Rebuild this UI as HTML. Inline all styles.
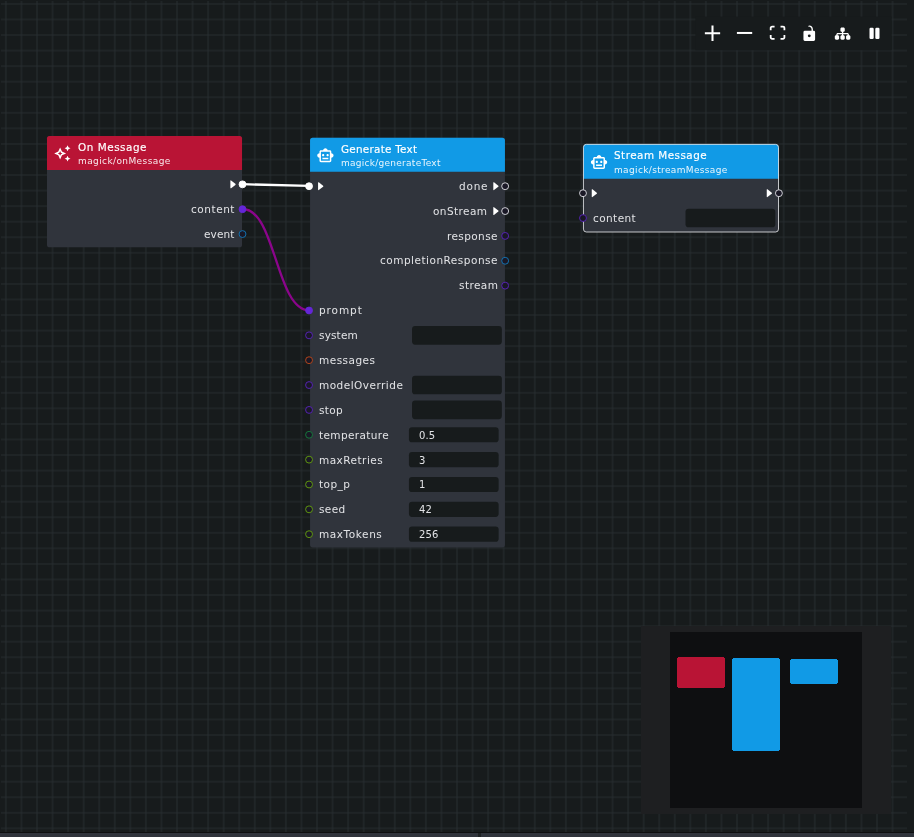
<!DOCTYPE html>
<html lang="en">
<head>
<meta charset="utf-8">
<title>Magick Graph</title>
<style>
html,body{margin:0;padding:0;}
body{width:914px;height:837px;overflow:hidden;background:#171b1c;position:relative;font-family:"DejaVu Sans", "Liberation Sans", sans-serif;color:#e2e3e6;}
#shapes{position:absolute;left:0;top:0;}
#labels{position:absolute;left:0;top:0;width:914px;height:837px;}
#labels div{position:absolute;white-space:nowrap;will-change:transform;}
.ttl{font-size:10.4px;line-height:12px;letter-spacing:0.47px;color:#fff;-webkit-text-stroke:0.15px #fff;}
.sub{font-size:9.0px;line-height:11px;letter-spacing:0.36px;color:rgba(255,255,255,0.9);}
.lab{font-size:10.5px;line-height:12px;letter-spacing:0.3px;color:#e2e3e6;}
.val{font-size:10.0px;line-height:12px;letter-spacing:0.1px;color:#e2e3e6;}
</style>
</head>
<body>
<svg id="shapes" width="914" height="837" viewBox="0 0 914 837">
<defs><pattern id="grid" x="-1.8778" y="-3.8578" width="15.5556" height="15.5556" patternUnits="userSpaceOnUse">
<path d="M7.7778 0 V15.5556 M0 7.7778 H15.5556" stroke="#272d30" stroke-width="1" fill="none"/></pattern></defs>
<rect x="1" y="1" width="906" height="831" fill="url(#grid)"/>
<rect x="0" y="832" width="914" height="1" fill="#0e0f10"/>
<rect x="0" y="833" width="914" height="4" fill="#30343c"/>
<rect x="478" y="833" width="3" height="4" fill="#1e2224"/>
<path d="M242.5 209.0 C275.9 209.0 275.9 310.4 309.3 310.4" fill="none" stroke="#8b058b" stroke-width="2.3"/>
<path d="M242.5 184.2 L309.3 185.9" fill="none" stroke="#fff" stroke-width="2.3"/>
<rect x="47.00" y="135.95" width="195.04" height="111.35" rx="2.6" fill="#30343c"/>
<path d="M47.00 169.95 V138.55 Q47.00 135.95 49.60 135.95 H239.44 Q242.04 135.95 242.04 138.55 V169.95 Z" fill="#b91435"/>
<svg x="53.45" y="144.55" width="17.8" height="17.8" viewBox="0 0 24 24"><path fill="#fff" d="m19 9 1.25-2.75L23 5l-2.750-1.250L19 1l-1.250 2.750L15 5l2.750 1.250zm0 6-1.250 2.750L15 19l2.750 1.250L19 23l1.250-2.750L23 19l-2.750-1.250zm-7.500-5.500L9 4 6.500 9.500 1 12l5.500 2.500L9 20l2.500-5.500L17 12zm-1.510 3.490L9 15.170l-.99-2.180L5.830 12l2.180-.99L9 8.830l.99 2.180 2.180.99z"/></svg>
<circle cx="242.50" cy="184.35" r="3.45" fill="#fff" stroke="#fff" stroke-width="0.9"/>
<path transform="translate(230.39 180.05)" d="M0.7 0.4 Q0 0 0 0.9 V7.7 Q0 8.6 0.7 8.2 L5 4.85 Q5.55 4.3 5 3.75 Z" fill="#fff"/>
<circle cx="242.50" cy="209.21" r="3.45" fill="#6426d7" stroke="#6426d7" stroke-width="0.9"/>
<circle cx="242.50" cy="234.06" r="3.45" fill="#1a1826" stroke="#1279bd" stroke-width="0.9"/>
<rect x="310.04" y="137.80" width="194.90" height="409.65" rx="2.6" fill="#30343c"/>
<path d="M310.04 171.80 V140.40 Q310.04 137.80 312.64 137.80 H502.34 Q504.94 137.80 504.94 140.40 V171.80 Z" fill="#119ae6"/>
<svg x="316.49" y="146.65" width="17.8" height="17.8" viewBox="0 0 24 24"><path fill="#fff" d="M20 9V7c0-1.100-.9-2-2-2h-3c0-1.660-1.340-3-3-3S9 3.340 9 5H6c-1.100 0-2 .9-2 2v2c-1.660 0-3 1.340-3 3s1.340 3 3 3v4c0 1.100.9 2 2 2h12c1.100 0 2-.9 2-2v-4c1.660 0 3-1.340 3-3s-1.340-3-3-3zm-2 10H6V7h12v12zm-9-6c-.830 0-1.500-.670-1.500-1.500S8.170 10 9 10s1.500.67 1.500 1.500S9.830 13 9 13zm7.500-1.500c0 .830-.670 1.500-1.500 1.500s-1.500-.670-1.500-1.500.670-1.500 1.500-1.500 1.500.67 1.500 1.500zM8 15h8v2H8v-2z"/></svg>
<circle cx="309.05" cy="186.20" r="3.45" fill="#fff" stroke="#fff" stroke-width="0.9"/>
<path transform="translate(318.09 181.90)" d="M0.7 0.4 Q0 0 0 0.9 V7.7 Q0 8.6 0.7 8.2 L5 4.85 Q5.55 4.3 5 3.75 Z" fill="#fff"/>
<circle cx="505.15" cy="186.20" r="3.45" fill="#1a1826" stroke="#e4e4ea" stroke-width="0.9"/>
<path transform="translate(493.29 181.90)" d="M0.7 0.4 Q0 0 0 0.9 V7.7 Q0 8.6 0.7 8.2 L5 4.85 Q5.55 4.3 5 3.75 Z" fill="#fff"/>
<circle cx="505.15" cy="211.06" r="3.45" fill="#1a1826" stroke="#e4e4ea" stroke-width="0.9"/>
<path transform="translate(493.29 206.76)" d="M0.7 0.4 Q0 0 0 0.9 V7.7 Q0 8.6 0.7 8.2 L5 4.85 Q5.55 4.3 5 3.75 Z" fill="#fff"/>
<circle cx="505.15" cy="235.91" r="3.45" fill="#1a1826" stroke="#5a24c0" stroke-width="0.9"/>
<circle cx="505.15" cy="260.77" r="3.45" fill="#1a1826" stroke="#1279bd" stroke-width="0.9"/>
<circle cx="505.15" cy="285.63" r="3.45" fill="#1a1826" stroke="#5a24c0" stroke-width="0.9"/>
<circle cx="309.05" cy="310.49" r="3.45" fill="#6426d7" stroke="#6426d7" stroke-width="0.9"/>
<circle cx="309.05" cy="335.34" r="3.45" fill="#1a1826" stroke="#5a24c0" stroke-width="0.9"/>
<rect x="412.04" y="326.04" width="89.8" height="18.6" rx="3.1" fill="#171b1c"/>
<circle cx="309.05" cy="360.20" r="3.45" fill="#1a1826" stroke="#c2491a" stroke-width="0.9"/>
<circle cx="309.05" cy="385.06" r="3.45" fill="#1a1826" stroke="#5a24c0" stroke-width="0.9"/>
<rect x="412.04" y="375.76" width="89.8" height="18.6" rx="3.1" fill="#171b1c"/>
<circle cx="309.05" cy="409.91" r="3.45" fill="#1a1826" stroke="#5a24c0" stroke-width="0.9"/>
<rect x="412.04" y="400.61" width="89.8" height="18.6" rx="3.1" fill="#171b1c"/>
<circle cx="309.05" cy="434.77" r="3.45" fill="#1a1826" stroke="#15803d" stroke-width="0.9"/>
<rect x="408.94" y="427.17" width="89.7" height="15.2" rx="3.1" fill="#171b1c"/>
<circle cx="309.05" cy="459.63" r="3.45" fill="#1a1826" stroke="#65a30d" stroke-width="0.9"/>
<rect x="408.94" y="452.03" width="89.7" height="15.2" rx="3.1" fill="#171b1c"/>
<circle cx="309.05" cy="484.48" r="3.45" fill="#1a1826" stroke="#65a30d" stroke-width="0.9"/>
<rect x="408.94" y="476.88" width="89.7" height="15.2" rx="3.1" fill="#171b1c"/>
<circle cx="309.05" cy="509.34" r="3.45" fill="#1a1826" stroke="#65a30d" stroke-width="0.9"/>
<rect x="408.94" y="501.74" width="89.7" height="15.2" rx="3.1" fill="#171b1c"/>
<circle cx="309.05" cy="534.20" r="3.45" fill="#1a1826" stroke="#65a30d" stroke-width="0.9"/>
<rect x="408.94" y="526.60" width="89.7" height="15.2" rx="3.1" fill="#171b1c"/>
<rect x="583.45" y="144.35" width="195.05" height="87.65" rx="2.9" fill="#30343c"/>
<path d="M583.45 178.80 V147.25 Q583.45 144.35 586.35 144.35 H775.60 Q778.50 144.35 778.50 147.25 V178.80 Z" fill="#119ae6"/>
<rect x="583.45" y="144.35" width="195.05" height="87.65" rx="2.9" fill="none" stroke="#f4f5f7" stroke-width="0.78"/>
<svg x="590.15" y="153.40" width="17.8" height="17.8" viewBox="0 0 24 24"><path fill="#fff" d="M20 9V7c0-1.100-.9-2-2-2h-3c0-1.660-1.340-3-3-3S9 3.340 9 5H6c-1.100 0-2 .9-2 2v2c-1.660 0-3 1.340-3 3s1.340 3 3 3v4c0 1.100.9 2 2 2h12c1.100 0 2-.9 2-2v-4c1.660 0 3-1.340 3-3s-1.340-3-3-3zm-2 10H6V7h12v12zm-9-6c-.830 0-1.500-.670-1.500-1.500S8.170 10 9 10s1.500.67 1.500 1.500S9.830 13 9 13zm7.500-1.500c0 .830-.670 1.500-1.500 1.500s-1.500-.670-1.500-1.500.670-1.500 1.500-1.500 1.500.67 1.500 1.500zM8 15h8v2H8v-2z"/></svg>
<circle cx="583.00" cy="193.20" r="3.45" fill="#1a1826" stroke="#e4e4ea" stroke-width="0.9"/>
<path transform="translate(591.75 188.90)" d="M0.7 0.4 Q0 0 0 0.9 V7.7 Q0 8.6 0.7 8.2 L5 4.85 Q5.55 4.3 5 3.75 Z" fill="#fff"/>
<circle cx="778.90" cy="193.20" r="3.45" fill="#1a1826" stroke="#e4e4ea" stroke-width="0.9"/>
<path transform="translate(766.75 188.90)" d="M0.7 0.4 Q0 0 0 0.9 V7.7 Q0 8.6 0.7 8.2 L5 4.85 Q5.55 4.3 5 3.75 Z" fill="#fff"/>
<circle cx="583.00" cy="218.06" r="3.45" fill="#1a1826" stroke="#5a24c0" stroke-width="0.9"/>
<rect x="685.50" y="208.76" width="89.8" height="18.6" rx="3.1" fill="#171b1c"/>
<rect x="695.4" y="16.6" width="196.2" height="33.6" fill="#171b1c"/>
<g fill="#fff">
<path transform="translate(704.85 25.6) scale(0.478)" d="M32 18.133H18.133V32h-4.266V18.133H0v-4.266h13.867V0h4.266v13.867H32z"/>
<path transform="translate(736.9 31.95) scale(0.478)" d="M0 0h32v4.2H0z"/>
<path transform="translate(769.8 25.65) scale(0.4844 0.478)" d="M3.692 4.63c0-.53.4-.938.939-.938h5.215V0H4.708C2.13 0 0 2.054 0 4.63v5.216h3.692V4.631zM27.354 0h-5.200v3.692h5.170c.53 0 .984.4.984.939v5.215H32V4.631A4.624 4.624 0 0027.354 0zm.954 24.830c0 .532-.4.940-.939.940h-5.215v3.768h5.215c2.577 0 4.631-2.130 4.631-4.707v-5.139h-3.692v5.139zm-23.677.940c-.531 0-.939-.4-.939-.940v-5.138H0v5.139c0 2.577 2.130 4.707 4.708 4.707h5.138V25.770H4.631z"/>
<path transform="translate(803.45 25.6) scale(0.478)" d="M21.333 10.667H19.810V7.619C19.810 3.429 16.380 0 12.190 0c-4.114 1.828-1.370 2.133.305 2.438 1.676.305 4.420 2.590 4.420 5.181v3.048H3.047A3.056 3.056 0 000 13.714v15.238A3.056 3.056 0 003.048 32h18.285a3.056 3.056 0 003.048-3.048V13.714a3.056 3.056 0 00-3.048-3.047zM12.190 24.533a3.056 3.056 0 01-3.047-3.047 3.056 3.056 0 013.047-3.048 3.056 3.056 0 013.048 3.048 3.056 3.056 0 01-3.048 3.047z"/>
<path transform="translate(834.8 26.63) scale(0.02708)" d="M208 80c0-26.500 21.500-48 48-48h64c26.500 0 48 21.500 48 48v64c0 26.500-21.500 48-48 48h-8v40H464c30.900 0 56 25.100 56 56v32h8c26.500 0 48 21.500 48 48v64c0 26.500-21.500 48-48 48H464c-26.500 0-48-21.500-48-48V368c0-26.500 21.500-48 48-48h8V288c0-4.400-3.600-8-8-8H312v40h8c26.500 0 48 21.500 48 48v64c0 26.500-21.500 48-48 48H256c-26.500 0-48-21.500-48-48V368c0-26.500 21.500-48 48-48h8V280H112c-4.400 0-8 3.600-8 8v32h8c26.500 0 48 21.500 48 48v64c0 26.500-21.500 48-48 48H48c-26.500 0-48-21.500-48-48V368c0-26.500 21.500-48 48-48h8V288c0-30.900 25.100-56 56-56H264V192h-8c-26.500 0-48-21.500-48-48V80z"/>
<rect x="869.5" y="27.8" width="4.2" height="11.2" rx="1.2"/>
<rect x="875.3" y="27.8" width="4.2" height="11.2" rx="1.2"/>
</g>
<g shape-rendering="crispEdges">
<rect x="641" y="626" width="250" height="188" fill="#1e1f21"/>
<rect x="670" y="632" width="192" height="176" fill="#0e0f11"/>
<rect x="677" y="657" width="48" height="31" rx="2.4" fill="#b91435"/>
<rect x="732" y="658" width="48" height="93" rx="2.4" fill="#119ae6"/>
<rect x="790" y="659" width="48" height="25" rx="2.4" fill="#119ae6"/>
</g>
</svg>
<div id="labels">
<div class="ttl" style="left:77.90px;top:141.30px;letter-spacing:0.544px;">On Message</div>
<div class="sub" style="left:77.90px;top:155.80px;letter-spacing:0.396px;">magick/onMessage</div>
<div class="lab" style="left:191.30px;top:203.30px;letter-spacing:0.540px;">content</div>
<div class="lab" style="left:204.20px;top:228.30px;letter-spacing:0.120px;">event</div>
<div class="ttl" style="left:341.10px;top:143.30px;letter-spacing:0.265px;">Generate Text</div>
<div class="sub" style="left:341.10px;top:157.80px;letter-spacing:0.267px;">magick/generateText</div>
<div class="lab" style="left:459.10px;top:180.30px;letter-spacing:0.780px;">done</div>
<div class="lab" style="left:433.00px;top:205.30px;letter-spacing:0.429px;">onStream</div>
<div class="lab" style="left:447.20px;top:230.30px;letter-spacing:0.403px;">response</div>
<div class="lab" style="left:379.60px;top:254.30px;letter-spacing:0.497px;">completionResponse</div>
<div class="lab" style="left:458.60px;top:279.30px;letter-spacing:0.432px;">stream</div>
<div class="lab" style="left:319.10px;top:304.30px;letter-spacing:0.924px;">prompt</div>
<div class="lab" style="left:319.10px;top:329.30px;letter-spacing:0.156px;">system</div>
<div class="lab" style="left:319.10px;top:354.30px;letter-spacing:0.479px;">messages</div>
<div class="lab" style="left:319.10px;top:379.30px;letter-spacing:0.478px;">modelOverride</div>
<div class="lab" style="left:319.10px;top:404.30px;letter-spacing:0.320px;">stop</div>
<div class="lab" style="left:319.10px;top:429.30px;letter-spacing:0.360px;">temperature</div>
<div class="val" style="left:418.54px;top:429.80px;">0.5</div>
<div class="lab" style="left:319.10px;top:454.30px;letter-spacing:0.474px;">maxRetries</div>
<div class="val" style="left:418.54px;top:454.80px;">3</div>
<div class="lab" style="left:319.10px;top:478.30px;letter-spacing:0.449px;">top_p</div>
<div class="val" style="left:418.54px;top:478.80px;">1</div>
<div class="lab" style="left:319.10px;top:503.30px;letter-spacing:0.360px;">seed</div>
<div class="val" style="left:418.54px;top:503.80px;">42</div>
<div class="lab" style="left:319.10px;top:528.30px;letter-spacing:0.576px;">maxTokens</div>
<div class="val" style="left:418.54px;top:528.80px;">256</div>
<div class="ttl" style="left:614.40px;top:149.30px;letter-spacing:0.481px;">Stream Message</div>
<div class="sub" style="left:614.40px;top:164.80px;letter-spacing:0.349px;">magick/streamMessage</div>
<div class="lab" style="left:592.70px;top:212.30px;letter-spacing:0.420px;">content</div>
</div>
</body>
</html>
